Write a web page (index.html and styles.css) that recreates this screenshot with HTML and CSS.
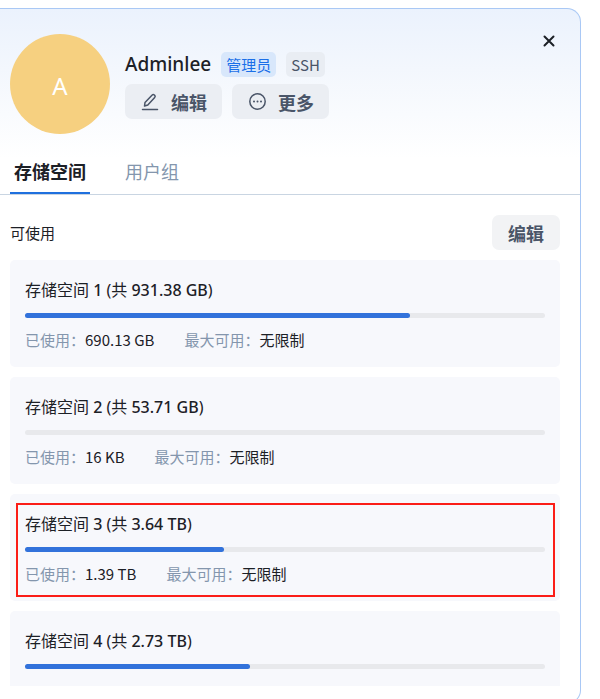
FILE: index.html
```html
<!DOCTYPE html>
<html lang="zh-CN">
<head>
    <meta charset="UTF-8">
    <meta name="viewport" content="width=device-width, initial-scale=1.0">
    <title>Adminlee</title>
    <link rel="stylesheet" href="styles.css">
</head>
<body>
    <main class="panel">
        <header class="profile">
            <div class="avatar">A</div>
            <div class="profile-info">
                <div class="name-row">
                    <h1>Adminlee</h1>
                    <span class="tag tag-admin">管理员</span>
                    <span class="tag">SSH</span>
                </div>
                <div class="actions">
                    <button type="button" class="btn">
                        <svg class="icon" viewBox="0 0 20 20" aria-hidden="true">
                            <path d="M4.500 14 L5 10.500 L12.200 3 a1.500 1.500 0 0 1 2.100 0 l.4.4 a1.500 1.500 0 0 1 0 2.100 L7.800 13 Z"/>
                            <path d="M2.500 17.500 H17.500"/>
                        </svg>
                        编辑
                    </button>
                    <button type="button" class="btn">
                        <svg class="icon" viewBox="0 0 20 20" aria-hidden="true">
                            <circle cx="10.500" cy="9.500" r="7.700"/>
                            <path class="dots" d="M7 9.500 h.01 M10.500 9.500 h.01 M14 9.500 h.01"/>
                        </svg>
                        更多
                    </button>
                </div>
            </div>
            <button type="button" class="close" aria-label="关闭">
                <svg viewBox="0 0 12 12" aria-hidden="true"><path d="M1.500 1.500 L10.500 10.500 M10.500 1.500 L1.500 10.500"/></svg>
            </button>
        </header>

        <nav class="tabs">
            <a href="#storage" class="tab active">存储空间</a>
            <a href="#groups" class="tab">用户组</a>
        </nav>

        <section class="storage" id="storage">
            <div class="storage-head">
                <h2>可使用</h2>
                <button type="button" class="btn btn-plain">编辑</button>
            </div>

            <div class="cards">
                <article class="card">
                    <h3>存储空间 <b>1</b> (共 <b>931.38 GB</b>)</h3>
                    <div class="bar"><div class="bar-fill" style="width: 74.1%"></div></div>
                    <dl>
                        <div><dt>已使用：</dt><dd>690.13 GB</dd></div>
                        <div><dt>最大可用：</dt><dd>无限制</dd></div>
                    </dl>
                </article>
                <article class="card">
                    <h3>存储空间 <b>2</b> (共 <b>53.71 GB</b>)</h3>
                    <div class="bar"><div class="bar-fill" style="width: 0%"></div></div>
                    <dl>
                        <div><dt>已使用：</dt><dd>16 KB</dd></div>
                        <div><dt>最大可用：</dt><dd>无限制</dd></div>
                    </dl>
                </article>
                <article class="card marked">
                    <h3>存储空间 <b>3</b> (共 <b>3.64 TB</b>)</h3>
                    <div class="bar"><div class="bar-fill" style="width: 38.2%"></div></div>
                    <dl>
                        <div><dt>已使用：</dt><dd>1.39 TB</dd></div>
                        <div><dt>最大可用：</dt><dd>无限制</dd></div>
                    </dl>
                </article>
                <article class="card">
                    <h3>存储空间 <b>4</b> (共 <b>2.73 TB</b>)</h3>
                    <div class="bar"><div class="bar-fill" style="width: 43.3%"></div></div>
                </article>
            </div>
        </section>
    </main>
</body>
</html>
```

FILE: styles.css
```css
* {
    box-sizing: border-box;
}

body {
    margin: 0;
    height: 100vh;
    overflow: hidden;
    background: #fff;
    color: #1c2026;
    font-family: "Noto Sans", "Noto Sans CJK SC", sans-serif;
    font-size: 15px;
}

h1, h2, h3, dl, dd {
    margin: 0;
}

button {
    font-family: inherit;
    border: none;
    cursor: pointer;
}

.panel {
    display: flex;
    flex-direction: column;
    height: calc(100vh - 3px);
    margin: 8px 19px 0 0;
    padding-bottom: 17px;
    border: 1px solid #a9c8f5;
    border-left: none;
    border-radius: 0 14px 14px 0;
    background: linear-gradient(#ebf2fd, #f3f7fd 60px, #fff 150px);
}

.profile {
    display: flex;
    gap: 15px;
    padding: 25px 20px 0 10px;
}

.avatar {
    width: 100px;
    height: 100px;
    border-radius: 50%;
    background: #f6d080;
    color: #fff;
    font-size: 24px;
    line-height: 104px;
    text-align: center;
}

.profile-info {
    flex: 1;
    padding-top: 17px;
}

.name-row {
    display: flex;
    align-items: center;
    gap: 10px;
    height: 26px;
}

h1 {
    font-size: 19px;
    font-weight: 500;
    line-height: 28px;
}

.tag {
    padding: 0 5px;
    border-radius: 5px;
    background: #e9edf3;
    color: #4a5568;
    font-family: "Noto Sans CJK SC", sans-serif;
    font-size: 15px;
    line-height: 25px;
}

.tag-admin {
    background: #d8e7fb;
    color: #1a6fe8;
}

.actions {
    display: flex;
    gap: 10px;
    margin-top: 7px;
}

.btn {
    display: flex;
    align-items: center;
    gap: 11px;
    height: 35px;
    padding: 0 15px;
    border-radius: 7px;
    background: #ebeef3;
    color: #4a5568;
    font-size: 18px;
    font-weight: 700;
}

.btn-plain {
    padding: 0 16px;
    background: #f2f3f5;
}

.icon {
    width: 20px;
    height: 20px;
    fill: none;
    stroke: #4a5568;
    stroke-width: 1.5;
    stroke-linecap: round;
    stroke-linejoin: round;
}

.icon .dots {
    stroke-width: 2;
}

.close {
    width: 22px;
    height: 22px;
    margin-top: -4px;
    padding: 5px;
    background: none;
}

.close svg {
    display: block;
    width: 12px;
    height: 12px;
    stroke: #1c2026;
    stroke-width: 2;
    stroke-linecap: round;
}

.tabs {
    display: flex;
    gap: 31px;
    margin-top: 20px;
    padding-left: 10px;
    border-bottom: 1px solid #c9d5e2;
}

.tab {
    height: 40px;
    padding: 0 4px;
    border-bottom: 2px solid transparent;
    color: #8496ad;
    font-size: 18px;
    line-height: 36px;
    text-decoration: none;
}

.tab.active {
    border-color: #1f70de;
    color: #1c2026;
    font-weight: 700;
}

.storage {
    display: flex;
    flex: 1;
    flex-direction: column;
    min-height: 0;
    padding: 20px 20px 0 10px;
}

.storage-head {
    display: flex;
    align-items: center;
    justify-content: space-between;
    margin-bottom: 10px;
}

h2 {
    font-size: 15px;
    font-weight: 400;
}

.cards {
    display: flex;
    flex: 1;
    flex-direction: column;
    gap: 10px;
    min-height: 0;
    overflow: hidden;
}

.card {
    position: relative;
    flex: none;
    padding: 15px;
    border-radius: 5px;
    background: #f7f8fc;
}

h3 {
    font-size: 16px;
    font-weight: 400;
    line-height: 30px;
}

h3 b {
    font-weight: 500;
}

.bar {
    height: 5px;
    margin: 8px 0 10px;
    border-radius: 3px;
    background: #e8e9ec;
}

.bar-fill {
    height: 100%;
    border-radius: 3px;
    background: #3272db;
}

dl {
    display: flex;
    gap: 30px;
    font-family: "Noto Sans CJK SC", sans-serif;
    line-height: 24px;
}

dl div {
    display: flex;
}

dt {
    color: #8496ad;
}

.marked::after {
    content: "";
    position: absolute;
    inset: 9px 5px 4px 6px;
    border: 2px solid #fb1d17;
}
```
